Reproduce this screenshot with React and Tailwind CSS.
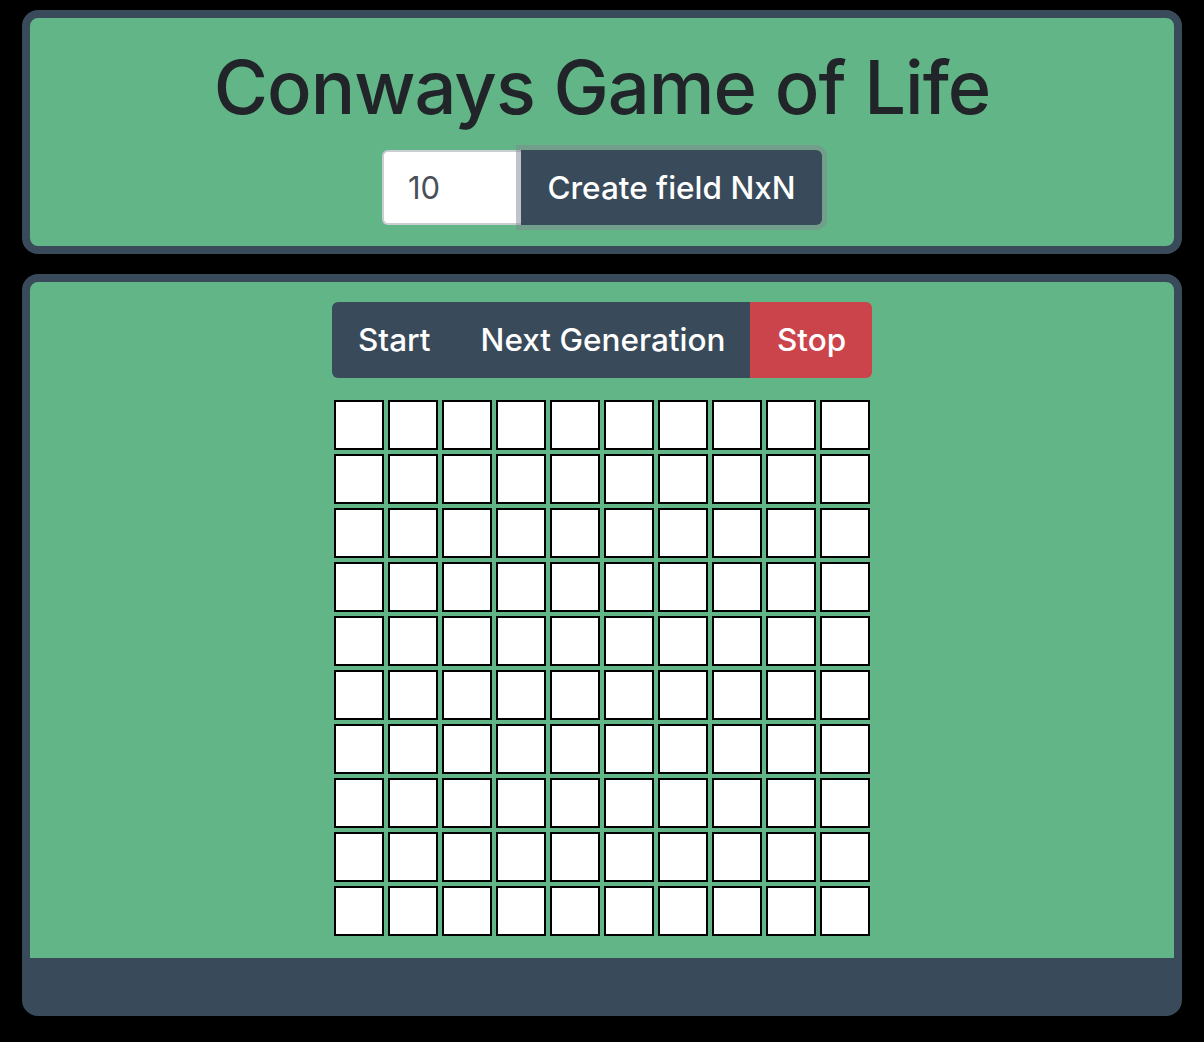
export default function App() {
  const rows = Array.from({ length: 10 });
  return (
    <div className="min-h-[1042px] w-[1204px] bg-black pt-[10px] pl-[22px]" style={{ fontFamily: "Inter, 'Noto Sans', sans-serif" }}>
      <div className="w-[1160px] h-[244px] border-[8px] border-[#394a5a] rounded-[16px] bg-[#62b587] flex flex-col items-center">
        <h1 className="mt-[24px] text-[74px] leading-[90px] font-medium text-[#212529] tracking-[-1px] whitespace-nowrap">Conways Game of Life</h1>
        <div className="mt-[18px] flex">
          <input
            readOnly
            value="10"
            className="w-[139px] h-[75px] bg-white border-2 border-[#c9ced3] border-r-0 rounded-l-[6px] pl-[24px] text-[31px] text-[#495057] outline-none"
          />
          <button className="h-[75px] w-[301px] bg-[#394a5a] text-white text-[31.5px] font-medium rounded-r-[6px] shadow-[0_0_0_5px_rgba(130,138,145,0.5)] whitespace-nowrap">
            Create field NxN
          </button>
        </div>
      </div>
      <div className="mt-[20px] w-[1160px] h-[742px] border-[8px] border-b-[58px] border-[#394a5a] rounded-[16px] bg-[#62b587] flex flex-col items-center">
        <div className="mt-[20px] flex h-[76px] w-[540px] rounded-[6px] overflow-hidden text-white text-[31.5px] font-medium whitespace-nowrap">
          <button className="bg-[#394a5a] pl-[26px] pr-[26px]">Start</button>
          <button className="bg-[#394a5a] pl-[24px] pr-[22px] flex-1 text-left">Next Generation</button>
          <button className="bg-[#cc444b] w-[122px] pl-[27px] text-left">Stop</button>
        </div>
        <div className="mt-[22px] grid grid-cols-10 gap-[4px]">
          {rows.map((_, r) =>
            rows.map((_, c) => (
              <div key={r + "-" + c} className="w-[50px] h-[50px] bg-white border-2 border-black" />
            ))
          )}
        </div>
      </div>
    </div>
  );
}
